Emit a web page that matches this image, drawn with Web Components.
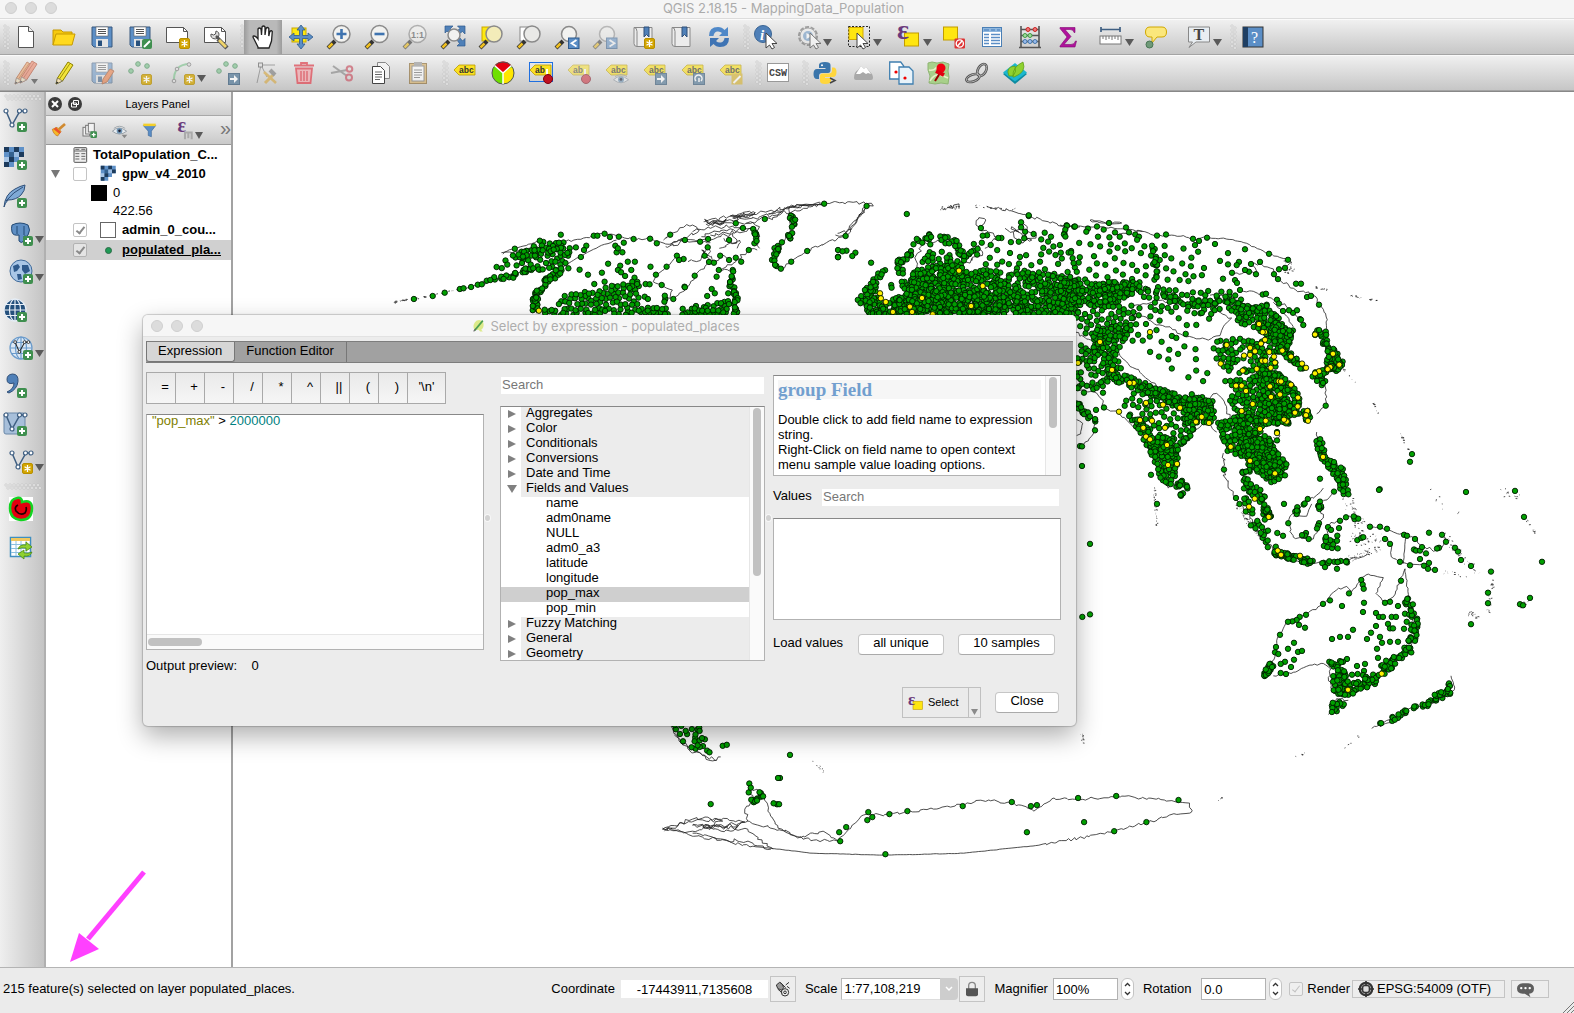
<!DOCTYPE html>
<html lang="en">
<head>
<meta charset="utf-8">
<title>QGIS 2.18.15 - MappingData_Population</title>
<style>
html,body{margin:0;height:100%}
body{font:13px/16px "Liberation Sans",Arial,sans-serif;color:#000;overflow:hidden;background:#ececec}
</style>
</head>
<body>
<qgis-app></qgis-app>
<script>
/* ---------- icon library: every glyph sits in a 24 x 24 box ---------- */
const plus='<rect x="14" y="14" width="10" height="10" rx="2" fill="#3f8f4f"/><path d="M19 16v6M16 19h6" stroke="#fff" stroke-width="2"/>';
const star='<rect x="13.5" y="13.5" width="10" height="10" rx="1.5" fill="#d3a500" stroke="#b88f00"/><path d="M18.5 15v7M15.5 16.8l6 3.5M21.5 16.8l-6 3.5" stroke="#fff" stroke-width="1.3"/>';
const lens=(x,y,r,f='#f2f2f0')=>`<path d="M1 23l7-7" stroke="#333" stroke-width="4"/><path d="M1.5 22.5l4-4" stroke="#f0c020" stroke-width="2.5"/><circle cx="${x}" cy="${y}" r="${r}" fill="${f}" stroke="#8a8a8a" stroke-width="1.5"/>`;
const page='<path d="M4.5 1.5h10l5 5v16h-15z" fill="#fff" stroke="#555"/><path d="M14.5 1.5v5h5" fill="#eee" stroke="#555"/>';
const floppy='<path d="M2 2h20v20H4l-2-2z" fill="#5d8fc6" stroke="#39597f"/><rect x="6" y="2" width="12" height="9" fill="#fff" stroke="#666" stroke-width=".6"/><path d="M8 4.5h8M8 6.5h8M8 8.5h8" stroke="#555"/><rect x="6" y="14" width="12" height="8" fill="#e4e4e4"/><rect x="8" y="15.5" width="4" height="5.5" fill="#28507c"/>';
const tag=t=>`<path d="M1 9l5-5h16v10H6z" fill="#fbe122" stroke="#b99a00" stroke-width=".8"/><text x="6" y="12" font-size="8.5" font-weight="bold" fill="#333" font-family="Liberation Sans">${t}</text>`;
const blueSq=p=>`<rect x="12.5" y="12.5" width="11" height="11" fill="#5b7f9c" stroke="#3d5f7c"/>${p}`;
const vee=(c='#3f5f82')=>`<path d="M3 3l6 14 8-14h5" fill="none" stroke="${c}" stroke-width="1.5"/><g fill="#fff" stroke="${c}" stroke-width="1.2"><circle cx="3" cy="3" r="2"/><circle cx="9" cy="17" r="2"/><circle cx="16.5" cy="3" r="2"/><circle cx="22" cy="3" r="2"/></g>`;
const checker='<path d="M1 1h20v10h-5v5h-5v5H1z" fill="#5f91c8"/><g fill="#1d3b5c"><rect x="1" y="1" width="5" height="5"/><rect x="11" y="1" width="5" height="5"/><rect x="6" y="6" width="5" height="5" fill="#34618f"/><rect x="16" y="6" width="5" height="5" fill="#1d3b5c"/><rect x="1" y="11" width="5" height="5" fill="#a9c6e6"/><rect x="11" y="6" width="5" height="5" fill="#9cbde2"/><rect x="6" y="11" width="5" height="5"/><rect x="1" y="16" width="5" height="5"/></g>';
const globe=(f,s)=>`<circle cx="12" cy="12" r="11" fill="${f}"/><g fill="none" stroke="${s}" stroke-width="1.2"><circle cx="12" cy="12" r="11"/><ellipse cx="12" cy="12" rx="5.5" ry="11"/><path d="M12 1v22M1 12h22M2.5 6.5h19M2.5 17.5h19"/></g>`;
const greenDots='<g fill="#8cc79a" stroke="#5f9a70"><circle cx="3" cy="10" r="2.3"/><circle cx="10" cy="3" r="2.3"/><circle cx="19" cy="5" r="2.3"/></g>';
const cursor='<path d="M10 8v15l3.5-3 2.5 4 2.5-1.5-2.5-4h5z" fill="#fff" stroke="#444"/>';
const pencil=(a,b)=>`<path d="M4 23l1.5-6L16 1l5 3L10.5 20z" fill="${a}" stroke="${b}"/><path d="M7.5 18L18 2.5" stroke="${b}" stroke-width=".8"/><path d="M4 23l1.5-6 5 3z" fill="#f3dfb5" stroke="#555" stroke-width=".6"/><path d="M4 23l.6-2.5 1.8 1z" fill="#222"/>`;
const eps=(x,y,s)=>`<text x="${x}" y="${y}" font-size="${s}" font-family="Liberation Serif" font-weight="bold" fill="#6a3a7c">ε</text>`;
const eye='<path d="M2 13q9-9 20 0q-10 8-20 0z" fill="#e9eef2" stroke="#7d8790"/><circle cx="12" cy="12.5" r="4" fill="#6f95b5"/><circle cx="12" cy="12.5" r="1.8" fill="#223"/><path d="M4 9q8-6 16 0" fill="none" stroke="#8a939b"/>';
const ICONS={
 file:page,
 open:'<path d="M1 20V5h8l2 2h9v4" fill="#f6c90e" stroke="#c79a00"/><path d="M1 20l3-11h19l-3 11z" fill="#ffd91f" stroke="#c79a00"/>',
 save:floppy,
 saveas:floppy+'<rect x="14" y="14" width="10" height="10" rx="2" fill="#3f8f4f"/><path d="M16 22l6-6" stroke="#fff" stroke-width="2"/>',
 composer:'<path d="M.5 2.5h17l4 4v11h-21z" fill="#fff" stroke="#555"/><path d="M17.5 2.5v4h4" fill="none" stroke="#555"/>'+star,
 manager:'<path d="M.5 2.5h17l4 4v11h-21z" fill="#fff" stroke="#555"/><path d="M17.5 2.5v4h4" fill="none" stroke="#555"/><path d="M14 14l9 9" stroke="#555" stroke-width="4.5"/><path d="M15 15l7 7" stroke="#f0d46a" stroke-width="2.8"/><path d="M7 9a4 4 0 1 0 5-3l-.5 3-2 1z" fill="#ddd" stroke="#555"/><path d="M12 11l3 3" stroke="#555" stroke-width="2.5"/>',
 hand:'<path d="M7 22L3 14q-2-3 0-3t4 3V4q1.5-2 3 0l.5 6L11 2q1.5-2 3 0v8l1-6.5q1.5-2 2.8 0V11l1-4.5q1.5-1.5 2.5 0L20.5 16 18 23H7z" fill="#fff" stroke="#222" stroke-width="1.3"/>',
 pan:'<rect x="3" y="3" width="14" height="14" fill="#fde910" stroke="#c9a800"/><path d="M12 0l4 5h-2.5v5.5H19V8l5 4-5 4v-2.5h-5.5V19H16l-4 5-4-5h2.5v-5.5H5V16l-5-4 5-4v2.5h5.5V5H8z" fill="#5b8ec6" stroke="#2f5a8c" stroke-width=".8"/>',
 zin:lens(14.5,9,8.5)+'<path d="M14.5 4v10M9.5 9h10" stroke="#3f74b0" stroke-width="2.6"/>',
 zout:lens(14.5,9,8.5)+'<path d="M9.5 9h10" stroke="#3f74b0" stroke-width="2.6"/>',
 z11:'<g opacity=".6">'+lens(14.5,9,8.5)+'<text x="8" y="12.5" font-size="9" font-weight="bold" fill="#555" font-family="Liberation Sans">1:1</text></g>',
 zfull:'<g fill="#4f80b8" stroke="#2f5a8c" stroke-width=".7"><path d="M4 1h8L9.5 3.5 12 7l-3 2-3-3-2 2zM24 1v8l-2.500-2.500L18 9l-2-3 3-2.500L16.500 1zM24 21h-8l2.500-2.500L16 15l3-2 2.500 3 2.500-2.500z"/></g>'+lens(13,10,6),
 zsel:'<rect x="3" y="2" width="12" height="14" fill="#fde910" stroke="#c9a800"/>'+lens(15,9,8,'#f3ecb9'),
 zlay:'<rect x="3" y="2" width="12" height="14" fill="#fff" stroke="#888"/>'+lens(15,9,8,'#e9e9e7'),
 zlast:lens(14,9,7.5)+'<rect x="13.5" y="13" width="10.5" height="10.5" fill="#5b8ec6" stroke="#2f5a8c"/><path d="M21.5 15l-5 3.3 5 3.3" fill="none" stroke="#fff" stroke-width="1.8"/>',
 znext:'<g opacity=".5">'+lens(14,9,7.5)+'<rect x="13.5" y="13" width="10.5" height="10.5" fill="#5b8ec6" stroke="#2f5a8c"/><path d="M16.5 15l5 3.3-5 3.3" fill="none" stroke="#fff" stroke-width="1.8"/></g>',
 bmnew:'<path d="M3 2.5h18v19H6q-3 0-3-3z" fill="#ececec" stroke="#888"/><path d="M3 2.5q3 0 3 4v15" fill="none" stroke="#888"/><path d="M13 2h5v10l-2.5-2.5L13 12z" fill="#4f80b8" stroke="#2f4f78"/>'+star,
 bm:'<path d="M3 2.5h18v19H6q-3 0-3-3z" fill="#ececec" stroke="#888"/><path d="M3 2.5q3 0 3 4v15" fill="none" stroke="#888"/><path d="M13 2h5v10l-2.5-2.5L13 12z" fill="#4f80b8" stroke="#2f4f78"/>',
 refresh:'<path d="M2 11Q2 2 11 2q4 0 6.500 3L21 2v9h-9l3-3q-2-2-5-1.500-3 .8-3.500 4.500z" fill="#4f88c8"/><path d="M22 13q0 9-9 9-4 0-6.500-3L3 22v-9h9l-3 3q2 2 5 1.500 3-.8 3.500-4.500z" fill="#3f74b4"/>',
 identify:'<circle cx="9" cy="9" r="8.5" fill="#4f80b8" stroke="#3a6595"/><text x="6" y="14.5" font-size="15" font-style="italic" font-weight="bold" fill="#fff" font-family="Liberation Serif">i</text><g transform="translate(2 0)">'+cursor+'</g>',
 action:'<g opacity=".65"><circle cx="11" cy="11" r="9" fill="#eee" stroke="#777" stroke-width="2" stroke-dasharray="4 1.6"/><circle cx="11" cy="11" r="8" fill="#eee" stroke="#888"/><circle cx="11" cy="11" r="5" fill="#7ca3cb"/><path d="M9.5 8l5 3-5 3z" fill="#fff"/><g transform="translate(3 0)">'+cursor+'</g></g>',
 select:'<rect x="1.5" y="1.5" width="21" height="20" fill="none" stroke="#222" stroke-dasharray="2 1.5"/><rect x="2" y="2.5" width="14" height="12" fill="#ffe610" stroke="#d1a900"/>'+cursor,
 selexp:'<rect x="7.5" y="8" width="14" height="13" fill="#ffe610" stroke="#c29c00"/>'+eps(0,14,28),
 deselect:'<rect x="1.5" y="2" width="14" height="13" fill="#ffe610" stroke="#c29c00"/><rect x="12.5" y="13.5" width="10.5" height="10" rx="1" fill="#dd3333"/><circle cx="17.8" cy="18.5" r="3.6" fill="none" stroke="#fff" stroke-width="1.4"/><path d="M15.5 21l4.5-5" stroke="#fff" stroke-width="1.4"/>',
 table:'<rect x="2.5" y="2.5" width="19" height="19" fill="#fff" stroke="#4a7fb5"/><rect x="3" y="3" width="18" height="4" fill="#8fb7de"/><path d="M4 9.5h5M4 12.5h5M4 15.5h5M4 18.5h5M11 9.5h9M11 12.5h9M11 15.5h9M11 18.5h9M4 5h5M11 5h4M17 5h3" stroke="#5b8ec6" stroke-width="1.3"/>',
 abacus:'<path d="M3 1v21M21 1v21M1 22.5h22M3 4.5h18M3 10.5h18M3 16.5h18" stroke="#555" stroke-width="1.6" fill="none"/><g fill="#e77" stroke="#c22"><circle cx="10" cy="4.5" r="2"/><circle cx="17" cy="4.5" r="2"/></g><g fill="#9d9" stroke="#494"><circle cx="7" cy="10.5" r="2"/><circle cx="12" cy="10.5" r="2"/></g><g fill="#9be" stroke="#47a"><circle cx="7" cy="16.5" r="2"/><circle cx="12" cy="16.5" r="2"/><circle cx="17" cy="16.5" r="2"/></g>',
 sigma:'<path d="M4 2.5h15v5h-1q-.5-3-4-3H9l6 7-7 8h7q3.5 0 4.5-3.5h1L19 22H4v-1l7-9-7-8.5z" fill="#b0129c" stroke="#7d0a70" stroke-width=".6"/>',
 measure:'<path d="M2 2v5M21 2v5M2 4.5h19" stroke="#3f5f82" stroke-width="1.7"/><rect x="1" y="11" width="21" height="8" fill="#fff" stroke="#777"/><path d="M4 11v3M7 11v4M10 11v3M13 11v4M16 11v3M19 11v4" stroke="#777"/>',
 tip:'<path d="M6 2h12q4.5 0 4.5 5t-4.5 5h-5l-5 6v-6H6q-4.5 0-4.5-5T6 2z" fill="#fbe77c" stroke="#d0a800"/><circle cx="5.5" cy="19.5" r="3.5" fill="#6f9a78" stroke="#4a7554"/>',
 text:'<path d="M1.5 2h21v15H9l-7 5.5 3.5-5.5h-4z" fill="#e9eef2" stroke="#888"/><text x="6.5" y="15" font-size="16" font-weight="bold" fill="#444" font-family="Liberation Serif">T</text>',
 help:'<rect x="2" y="2" width="20" height="20" fill="#5b8ec6" stroke="#333"/><rect x="2" y="2" width="5" height="20" fill="#1f3f63"/><text x="10" y="18" font-size="16" fill="#fff" font-family="Liberation Serif">?</text>',
 edits:'<g opacity=".55"><g transform="translate(-3 0)">'+pencil('#f0a060','#b05020')+'</g><g transform="translate(2 -1)">'+pencil('#f08060','#b04020')+'</g></g><path d="M17 18h7l-3.5 5z" fill="#777"/>',
 pencil:pencil('#f2e43a','#8d8000'),
 saveed:'<g opacity=".5">'+floppy+'<path d="M12 23l1-5 7-10 4 2-7 11z" fill="#f07030" stroke="#a04010"/></g>',
 addf:'<g opacity=".75">'+greenDots+star+'</g>',
 curve:'<g opacity=".75"><path d="M3 21Q2 3 19 3" fill="none" stroke="#8cc79a" stroke-width="2"/><g fill="#ddd" stroke="#888"><circle cx="3" cy="20" r="1.8"/><circle cx="6" cy="8" r="1.8"/><circle cx="18" cy="3.5" r="1.8"/></g>'+star+'</g>',
 movef:'<g opacity=".75">'+greenDots+blueSq('<path d="M14 17h4v-3l4 4-4 4v-3h-4z" fill="#fff"/>')+'</g>',
 node:'<g opacity=".6"><path d="M3 22L7 4l14 0M7 4l6 12" fill="none" stroke="#777"/><rect x="4.5" y="2" width="4" height="4" fill="#ddd" stroke="#555"/><path d="M11 22l9-9" stroke="#d6a53a" stroke-width="3"/><path d="M10 11l12 11" stroke="#d6a53a" stroke-width="2.5"/><path d="M16 9l5 5" stroke="#777" stroke-width="4"/></g>',
 trash:'<g opacity=".8"><path d="M2 4.5h20M9 4V2h6v2" fill="none" stroke="#e05560" stroke-width="1.8"/><path d="M4 7.5h16l-1.5 14.5h-13z" fill="#f0b0b4" stroke="#e05560" stroke-width="1.8"/><path d="M9 10v10M12 10v10M15 10v10" stroke="#e05560" stroke-width="1.5"/></g>',
 cut:'<g opacity=".65"><path d="M1 12l16-3M3 5l14 10" stroke="#888" stroke-width="2"/><circle cx="19.500" cy="8" r="2.800" fill="none" stroke="#c85060" stroke-width="2"/><circle cx="19" cy="16.500" r="3" fill="none" stroke="#c85060" stroke-width="2"/></g>',
 copy:'<path d="M9.5 1.5h8l4 4v12h-12z" fill="#f2f2f2" stroke="#888"/><path d="M4.5 5.5h8l4 4v13h-12z" fill="#fff" stroke="#444"/><path d="M7 11h7M7 13.5h7M7 16h7M7 18.5h5" stroke="#666"/>',
 paste:'<g opacity=".65"><rect x="3.5" y="2.5" width="17" height="20" fill="#d9b26a" stroke="#8b6b34"/><rect x="6" y="5" width="12" height="15" fill="#fff" stroke="#777"/><rect x="8" y="1" width="8" height="4" fill="#999"/><path d="M8 9h8M8 11.5h8M8 14h8M8 16.5h6" stroke="#777"/></g>',
 label:tag('abc'),
 pie:'<circle cx="12" cy="12" r="11" fill="#6ee000"/><path d="M12 12v11a11 11 0 0 0 9-17z" fill="#ffe600"/><path d="M12 12L3.5 4.500a11 11 0 0 1 17 0z" fill="#e3000f"/><circle cx="12" cy="12" r="11" fill="none" stroke="#555"/><path d="M12 12v11M12 12L3.500 4.500M12 12l8.500-7.500" stroke="#fff" stroke-width="1.5"/>',
 abpin:'<rect x=".5" y="1.5" width="23" height="19" fill="none" stroke="#1f6fe0"/>'+tag('ab')+'<path d="M18 8v8" stroke="#fff" stroke-width="2"/><circle cx="19" cy="18" r="4.5" fill="#c01020" stroke="#7c0010"/>',
 pin:'<g opacity=".5">'+tag('ab')+'<path d="M18 8v8" stroke="#fff" stroke-width="2"/><circle cx="19" cy="18" r="4.5" fill="#d02030" stroke="#7c0010"/></g>',
 labeye:'<g opacity=".6">'+tag('abc')+'<g transform="translate(7 9) scale(.75)">'+eye+'</g></g>',
 labmove:'<g opacity=".65">'+tag('abc')+blueSq('<path d="M14 17h4v-3l4 4-4 4v-3h-4z" fill="#fff"/>')+'</g>',
 labrot:'<g opacity=".65">'+tag('abc')+blueSq('<path d="M15 20a3.5 3.5 0 1 1 5 0M18 17l0 4" fill="none" stroke="#fff" stroke-width="1.5"/>')+'</g>',
 labedit:'<g opacity=".65">'+tag('abc')+'<rect x="12.5" y="12.5" width="11" height="11" fill="#d9b73a"/><path d="M14.5 22l7-7" stroke="#fff" stroke-width="2"/></g>',
 csw:'<rect x="1.5" y="2.5" width="21" height="18" fill="#fff" stroke="#999"/><text x="3" y="14.5" font-size="10" font-weight="bold" fill="#444" font-family="Liberation Mono">CSW</text>',
 python:'<path d="M12 1q-6 0-6 3v3h6.5v1H4q-3.5 0-3.5 5T4 18h2v-3q0-3 3-3h6q2.5 0 2.5-3V4Q17.5 1 12 1z" fill="#3a75ab"/><circle cx="9" cy="4.2" r="1" fill="#fff"/><path d="M12 23q6 0 6-3v-3h-6v-1h8q3.5 0 3.5-5T20 6.5h-1V9q0 3.5-3 3.5H9.5Q7 12.5 7 15v5q0 3 5 3z" fill="#ffd63d"/><path d="M17 17l5 2.5-5 2.5" fill="none" stroke="#444" stroke-width="1.5"/>',
 hill:'<path d="M3 17q0-6 4-8l3-4 3 3 2-2 4 5q3 2 3 6 0 2-2 2H5q-2 0-2-2z" fill="#a9a9a9"/><path d="M5 13l5-8 3 3 2-2 5 7-3-1-2 1-3-2-3 2z" fill="#fff"/>',
 docs:'<path d="M.7 1h11l3 4v13H.7z" fill="#fff" stroke="#3f7fb0" stroke-width="1.3"/><path d="M10 6h10l4 4v13H10z" fill="#e8f3fa" stroke="#3f7fb0" stroke-width="1.3"/><circle cx="7" cy="11" r="1.6" fill="#e00"/><circle cx="16" cy="17" r="1.6" fill="#e00"/>',
 mappin:'<path d="M1 2l4-1 5 1 6-1 6 2-1 7 1 6-1 7-7-1-6 1-6-1 1-7-2-6z" fill="#a8d08a" stroke="#8fb573"/><path d="M3 20q4-7 9-6t9 3M2 9q5 1 8-3" stroke="#e8f0c8" stroke-width="1.5" fill="none"/><path d="M13 12l-5 8" stroke="#900" stroke-width="2"/><circle cx="14" cy="7" r="4.5" fill="#f00010"/><path d="M9 10l8 4" stroke="#e00010" stroke-width="4"/>',
 chain:'<g fill="none" stroke="#555" stroke-width="2.6"><ellipse cx="17" cy="9" rx="4" ry="6.5" transform="rotate(30 17 9)"/><ellipse cx="8" cy="17" rx="7" ry="3.5" transform="rotate(-20 8 17)"/></g><g fill="none" stroke="#bbb" stroke-width=".8"><ellipse cx="17" cy="9" rx="4" ry="6.5" transform="rotate(30 17 9)"/><ellipse cx="8" cy="17" rx="7" ry="3.5" transform="rotate(-20 8 17)"/></g>',
 web:'<path d="M12 4l12 9-12 10L0 13z" fill="#0d8aa0"/><path d="M12 2l12 9.5-12 9L0 11.5z" fill="#1cb7cf"/><path d="M6 15Q2 6 12 5q2 6-2 10zM10 16Q9 6 20 1q4 10-9 15z" fill="#8fd12f" stroke="#5a9a10" stroke-width=".7"/>',
 vec:vee()+plus, ras:checker+plus,
 feather:'<path d="M1 23Q2 10 12 5q5-3 10-4 0 6-4 10-5 5-13 5-3 3-4 7z" fill="#7fa9d6" stroke="#2f4f78"/><path d="M3 17Q10 8 20 3" stroke="#2f4f78" fill="none"/>'+plus,
 pg:'<path d="M3 3q8-4 16 0 3 5 0 10-1 2-4 1v5q-3 3-5 0v-6q-6 1-7-3-1-4 0-7z" fill="#5f8fc4" stroke="#234a75"/><path d="M8 4v8M15 4v9" stroke="#234a75" fill="none"/>'+plus,
 spat:'<circle cx="12" cy="11" r="11" fill="#a9c6e6" stroke="#3f6a9a"/><path d="M4 6l5-2 2 3-3 4-3 1zM13 5l6 0 2 6-5 3-3-4zM8 14l4 0 1 5-4 1z" fill="#2f5a8c"/>'+plus,
 wms:globe('#24507c','#e7eef6')+plus,
 wfs:globe('#dce8f4','#6b9bcb')+'<g transform="translate(4 4) scale(.7)">'+vee('#222')+'</g>'+plus,
 comma:'<path d="M4 18q7-3 7-9-7 2-7-3.500 0-5 5.500-5.500 6 0 5.500 7.500-1 8-9 11.500z" fill="#4f80b8" stroke="#2f4f78"/>'+plus,
 virt:'<rect x="1" y="1" width="21" height="21" rx="2" fill="#a7bfda" stroke="#6a88a8"/>'+vee()+plus,
 newv:vee()+star,
 curl:'<rect width="24" height="24" fill="#fff"/><path d="M8 1q5-1 5 4 10-3 10 6 0 12-11 12Q1 22 1 11 1 2 8 1z" fill="#e3000f" stroke="#12d422" stroke-width="2.5"/><path d="M9 8q-4 2-2 6 4 5 9 2 2-3 1-6" fill="none" stroke="#200" stroke-width="1.7"/>',
 sheet:'<rect x="1.5" y="2.5" width="20" height="19" fill="#fff" stroke="#3f8fc0" stroke-width="1.5"/><rect x="2" y="3" width="19" height="3" fill="#f0c860"/><path d="M2 9.5h19M2 13.5h19M2 17.5h19M7 6v15M12 6v15M17 6v15" stroke="#8cc0e0"/><path d="M9 14q2-5 8-4V7l6 5-6 4v-3q-4-1-8 1zM23 17q-2 5-8 4v3l-6-5 6-4v3q4 1 8-1z" fill="#8fd12f" stroke="#4d8a10" stroke-width=".8"/>',
 brush:'<path d="M2 11l7-3 6 6-5 7q-6-2-8-10z" fill="#f5b928" stroke="#c26a10"/><path d="M7 8l8 7-2 3-9-7z" fill="#e8532f"/><path d="M12 11l9-8" stroke="#d08a30" stroke-width="4"/>',
 addgrp:'<g fill="#f2f2f2" stroke="#777" stroke-width="1.5"><rect x="3" y="8" width="10" height="13"/><rect x="7" y="5" width="10" height="13"/><rect x="11" y="2" width="9" height="13"/></g>'+plus,
 eye:eye+'<path d="M15 18h8l-4 5z" fill="#888"/>',
 funnel:'<path d="M2 4h20l-7 9v9l-5-2v-7z" fill="#5b8ec6" stroke="#3a6595"/><rect x="2" y="1" width="20" height="4" fill="#f3cf2b"/>',
 epsf:eps(3,14,24)+'<path d="M12 14v9M12 15h8v8M16 15v7" fill="none" stroke="#aaa" stroke-width="2.500"/>',
 tbl:'<rect x="3" y="1" width="19" height="22" rx="1" fill="#eee" stroke="#555" stroke-width="1.5"/><path d="M3 6h19M5 10h6M5 14h6M5 18h6M14 10h6M14 14h6M14 18h6M5 3.5h6M14 3.5h6" stroke="#666" stroke-width="1.5"/>',
 checker:checker,
 selx:'<rect x="8" y="10" width="15" height="13" fill="#ffe610" stroke="#c29c00"/>'+eps(0,16,27),
 q:'<path d="M4 20Q0 10 8 3q9-4 13 4 2 9-4 13l3 3h-5l-3-3q-3 1-4-1z" fill="#dcea8a"/><path d="M5 21L20 3" stroke="#4aa050" stroke-width="3"/><path d="M3 23l4-5" stroke="#666" stroke-width="2"/>',
 mouse:'<g fill="none" stroke="#333" stroke-width="1.5"><path d="M2 6l5-4 4 3 2 5-3 4-6-3z" fill="#999"/><circle cx="15" cy="17" r="5.5"/><circle cx="15" cy="17" r="2"/><path d="M8 2l8 8M4 12l7 6M16 6l5-4M18 8l4 3"/></g>',
 lock:'<path d="M7 12V7q0-5 5-5t5 5v5" fill="none" stroke="#888" stroke-width="2"/><path d="M3 11h18v9q0 3-3 3H6q-3 0-3-3z" fill="#555"/>',
 crs:'<circle cx="12" cy="12" r="9.5" fill="#999" stroke="#333" stroke-width="3"/><path d="M12 0v24M0 12h24" stroke="#333" stroke-width="2.5"/><rect x="7" y="7" width="10" height="10" rx="3" fill="#ddd" stroke="#333" stroke-width="2"/>',
 bubble:'<path d="M8 3h8q8 1 8 7.5T17 18l2 5-8-5H8q-8-1-8-7.5T8 3z" fill="#5e5e5e"/><g fill="#fff"><circle cx="6" cy="10" r="1.7"/><circle cx="12" cy="10" r="1.7"/><circle cx="18" cy="10" r="1.7"/></g>'
};
const svg=(n,s=24)=>`<svg width="${s}" height="${s}" viewBox="0 0 24 24" aria-hidden="true">${ICONS[n]}</svg>`;
const define=(name,html,setup)=>customElements.define(name,class extends HTMLElement{
  connectedCallback(){
    if(this.shadowRoot)return;
    const root=this.attachShadow({mode:'open'});
    root.innerHTML=typeof html==='function'?html(this):html;
    if(setup)setup(root,this);
  }
});

/* ---------- small parts ---------- */
define('ui-icon',el=>`<style>:host{display:inline-flex}svg{display:block;overflow:visible}</style>${svg(el.getAttribute('name'),+el.getAttribute('size')||24)}`);

define('window-lights',`<style>:host{display:flex;gap:8px}i{width:10px;height:10px;border:1px solid #cfcfcf;border-radius:50%;background:#dcdcdc}</style><i></i><i></i><i></i>`);

define('grip-dots',el=>{
  const v=el.hasAttribute('wide');let d='';
  for(let i=0;i<(v?9:6);i++){const a=i*4;d+=v?`<path d="M${5+a} 1h2v2h-2zM${7+a} 4h2v2h-2z"/>`:`<path d="M4 ${a}h2v2h-2zM7 ${a+2}h2v2h-2z"/>`;}
  return `<style>:host{display:flex;align-items:center;flex:none;${v?'height:7px;width:100%':'width:7px'}}svg{overflow:visible;display:block}</style><svg width="${v?44:7}" height="${v?7:24}" fill="#f8f8f8" stroke="#b8b8b8" stroke-width=".5">${d}</svg>`;
});

define('tool-button',el=>{
  const menu=el.hasAttribute('menu');
  return `<style>
  :host{display:block;flex:none}
  button{box-sizing:border-box;display:flex;align-items:center;justify-content:center;width:38px;height:34px;padding:0 0 1px;border:0;background:none}
  button.menu{width:50px;justify-content:flex-start;padding-left:12px;gap:2px}
  button.menu .a{margin-top:12px}
  :host([active]) button{background:linear-gradient(90deg,#9c9c9c,#b9b9b9 15%,#b9b9b9 85%,#9c9c9c)}
  :host([side]) button{width:45px;height:38px;justify-content:flex-start;padding-left:3px}
  :host([side][inset]) button,:host([side]) button.menu{padding-left:9px;gap:2px}
  svg{display:block;overflow:visible;flex:none}
  </style><button class="${menu?'menu':''}" aria-label="${el.getAttribute('icon')}">${svg(el.getAttribute('icon'))}${menu?'<svg class="a" width="9" height="9"><path d="M0 1h9l-4.5 7z" fill="#5a5a5a"/></svg>':''}</button>`;
});

define('tool-group',`<style>:host{display:flex;flex:none}:host([column]){flex-direction:column}</style><slot></slot>`);

define('tool-bar',`<style>
:host{display:flex;gap:2px;height:36px;background:linear-gradient(#f0f0f0,#c6c6c6);border-bottom:1px solid #a4a4a4;border-top:1px solid #fafafa;box-sizing:border-box;flex:none}
:host([column]){flex-direction:column;width:46px;height:auto;padding-top:2px;background:linear-gradient(90deg,#efefef,#c4c4c4);border:0;border-right:2px solid #b0b0b0}
</style><slot></slot>`);

/* ---------- layers panel ---------- */
define('layer-row',`<style>
:host{display:flex;align-items:center;height:18px;white-space:nowrap;font-weight:bold}
:host([tall]){height:20px}
:host([plain]){font-weight:normal}
:host([current]){background:#d0d0d0;text-decoration:underline}
</style><slot></slot>`);

define('layers-panel',`<style>
:host{display:flex;flex-direction:column;width:187px;flex:none;background:#fff;border-right:2px solid #a2a2a2;box-sizing:border-box;overflow:hidden}
header{display:flex;align-items:center;height:23px;background:linear-gradient(#f0f0f0,#cfcfcf);border-bottom:1px solid #a8a8a8;padding-left:2px;gap:6px;flex:none}
header svg,header button{display:block}
button{padding:0;border:0;background:none}
h2{margin:0;font:11px/16px "Liberation Sans",Arial,sans-serif;flex:1;text-align:center;padding-right:4px}
nav{display:flex;align-items:center;height:29px;background:linear-gradient(#efefef,#c9c9c9);border-bottom:1px solid #999;padding-left:5px;gap:14px;flex:none;box-sizing:border-box;margin-bottom:1px}
nav button{display:flex;align-items:flex-end}
nav .more{font:20px/20px "Liberation Sans",sans-serif;color:#777;margin-left:auto;padding:0 0 4px}
.fold{width:10px;margin:0 12px 0 5px}
input{appearance:none;box-sizing:border-box;width:14px;height:14px;margin:0 13px 0 0;border:1px solid #c4c4c4;border-radius:2px;background:#fff;position:relative}
.off{margin-left:27px}
layer-row[current] input{background:#e4e4e4;border-color:#b2b2b2}
input:checked::after{content:"";position:absolute;left:4px;top:1px;width:3px;height:7px;border:solid #8a8a8a;border-width:0 2px 2px 0;transform:rotate(38deg)}
.sw{width:14px;height:14px;border:1px solid #666;margin-right:6px}
.bk{width:16px;height:16px;background:#000;margin:0 6px 0 45px}
.pt{width:5px;height:5px;border-radius:50%;background:#1e9a55;border:1px solid #2c6b48;margin:0 10px 0 5px}
</style>
<header><button aria-label="Close panel"><svg width="14" height="14"><circle cx="7" cy="7" r="7" fill="#3c3c3c"/><path d="M4 4l6 6M10 4l-6 6" stroke="#fff" stroke-width="2"/></svg></button><button aria-label="Float panel"><svg width="14" height="14"><circle cx="7" cy="7" r="7" fill="#3c3c3c"/><path d="M5.5 3.5h5v4h-5zM3.5 6h5v4h-5z" stroke="#fff" fill="#3c3c3c"/></svg></button><h2>Layers Panel</h2></header>
<nav><button aria-label="Style"><ui-icon name="brush" size="16"></ui-icon></button><button aria-label="Add group"><ui-icon name="addgrp" size="16"></ui-icon></button><button aria-label="Visibility"><ui-icon name="eye" size="17"></ui-icon></button><button aria-label="Filter legend"><ui-icon name="funnel" size="15"></ui-icon></button><button aria-label="Filter by expression" style="margin-left:4px"><ui-icon name="epsf" size="20"></ui-icon><svg width="8" height="8"><path d="M0 0h8l-4 7z" fill="#5a5a5a"/></svg></button><button class="more" aria-label="More">»</button></nav>
<layer-row><ui-icon name="tbl" size="16" style="margin:0 5px 0 26px"></ui-icon>TotalPopulation_C...</layer-row>
<layer-row tall><svg class="fold" width="10" height="8"><path d="M0 0h9l-4.5 8z" fill="#777"/></svg><input type="checkbox" aria-label="gpw_v4_2010"><ui-icon name="checker" size="18" style="margin-right:4px"></ui-icon>gpw_v4_2010</layer-row>
<layer-row plain><span class="bk"></span>0</layer-row>
<layer-row plain><span style="margin-left:67px">422.56</span></layer-row>
<layer-row tall><input class="off" type="checkbox" checked aria-label="admin_0_countries"><span class="sw"></span>admin_0_cou...</layer-row>
<layer-row tall current><input class="off" type="checkbox" checked aria-label="populated_places"><span class="pt"></span>populated_pla...</layer-row>`);

/* ---------- map ---------- */
define('map-canvas',`<style>:host{display:block;flex:1;min-width:0;background:#fff;overflow:hidden}svg{display:block;width:100%;height:100%}</style>
<svg viewBox="233 92 1341 875" preserveAspectRatio="xMinYMin slice" role="img" aria-label="World map of populated places"></svg>`,root=>{
  let seed=20218;
  const rnd=()=>{seed=(seed*1664525+1013904223)>>>0;return seed/4294967296;};
  const lines=[],dots=[],gold=[];
  const frame=(ox,oy,kx,ky)=>s=>s.trim().split(/\s+/).map(p=>{const [x,y]=p.split(',').map(Number);return [ox+x/kx,oy+y/ky];});
  const W=frame(380,190,2.24,3), E=frame(1060,190,3,2.851), P=frame(0,0,.9962,.9962);
  const coast=(pts,j=1)=>{
    let d='M'+pts[0].map(v=>v.toFixed(1));
    for(let i=1;i<pts.length;i++){
      const [a,b]=pts[i-1],[c,e]=pts[i],len=Math.hypot(c-a,e-b),n=Math.max(1,Math.round(len/3));
      for(let k=1;k<=n;k++){const t=k/n,q=k<n?j:0;d+='L'+(a+(c-a)*t+(rnd()-.5)*2*q).toFixed(1)+' '+(b+(e-b)*t+(rnd()-.5)*2*q).toFixed(1);}
    }
    lines.push(d);
  };
  const chain=(pts,n,spread=1)=>{
    const seg=[];let tot=0;
    for(let i=1;i<pts.length;i++){const l=Math.hypot(pts[i][0]-pts[i-1][0],pts[i][1]-pts[i-1][1]);seg.push(l);tot+=l;}
    for(let k=0;k<n;k++){let t=rnd()*tot,i=0;while(t>seg[i]&&i<seg.length-1){t-=seg[i];i++;}
      const u=t/seg[i];dots.push([pts[i][0]+(pts[i+1][0]-pts[i][0])*u+(rnd()-.5)*2*spread,pts[i][1]+(pts[i+1][1]-pts[i][1])*u+(rnd()-.5)*2*spread]);}
  };
  const inside=(x,y,p)=>{let r=false;for(let i=0,j=p.length-1;i<p.length;j=i++){if((p[i][1]>y)!==(p[j][1]>y)&&x<(p[j][0]-p[i][0])*(y-p[i][1])/(p[j][1]-p[i][1])+p[i][0])r=!r;}return r;};
  const fill=(p,n,gap=2)=>{
    const xs=p.map(q=>q[0]),ys=p.map(q=>q[1]),x0=Math.min(...xs),x1=Math.max(...xs),y0=Math.min(...ys),y1=Math.max(...ys),own=[];
    let tries=0;
    while(own.length<n&&tries++<n*60){const x=x0+rnd()*(x1-x0),y=y0+rnd()*(y1-y0);
      if(inside(x,y,p)&&!own.some(o=>Math.hypot(o[0]-x,o[1]-y)<gap))own.push([x,y]);}
    dots.push(...own);
  };
  const put=p=>dots.push(...p);
  const specks=(pts,n,s)=>{for(let k=0;k<n;k++){const i=Math.floor(rnd()*(pts.length-1)),t=rnd(),x=pts[i][0]+(pts[i+1][0]-pts[i][0])*t+(rnd()-.5)*s,y=pts[i][1]+(pts[i+1][1]-pts[i][1])*t+(rnd()-.5)*s;lines.push(`M${x.toFixed(1)} ${y.toFixed(1)}l${(rnd()*2).toFixed(1)} ${(rnd()-.5).toFixed(1)}`);}};

  /* North America */
  specks(W('30,337 76,327 145,308 204,290 240,272'),70,2);
  coast(W('185,296 225,284 262,268 318,245 362,232 400,240'),1);
  put(W('76,327 118,318 145,308 179,297 187,295 204,291 219,284 228,283 239,272'));
  chain(W('235,272 262,262 285,262 318,245 345,238 370,230'),26,2);
  fill(W('245,240 270,225 290,195 330,180 360,152 405,155 440,165 435,200 410,230 362,240 300,235'),60,3);
  fill(W('310,185 420,170 420,190 320,200'),14);
  coast(W('272,188 302,176 358,152'),.5);coast(W('275,192 310,182 350,165'),1.5);coast(W('400,240 440,205 490,170 530,150'),.4);
  coast(W('360,175 400,156 450,148 480,137 503,131 535,140 568,147 605,146 640,162 683,150 740,158'),1);
  put(W('302,176 358,152 405,134 401,158 479,137 487,137 503,131 515,141 535,140 546,158 568,147 605,146 462,167 457,180 450,201 527,167 530,187 543,187 533,175 422,235 447,239 466,254 511,221 538,227 555,215 571,215 533,240 540,247 563,240 497,248 549,258 570,263 503,275 480,282 459,306 524,290'));
  chain(W('405,243 375,270 360,300 345,330 350,370'),60,3);coast(W('405,243 375,270 360,300 345,330 350,370'),2);coast(W('390,250 362,290 350,340'),2);
  fill(W('360,375 370,355 420,355 600,350 645,350 645,375'),55,2.5);
  fill(W('395,345 415,310 470,310 500,290 580,270 580,345'),62,3.5);
  put(W('593,320 600,327 639,327 637,335 559,294 576,282'));
  put(W('650,134 620,160 683,150 717,155 735,147 797,100 813,114 836,117 862,87 734,172 727,197 665,197 680,207 670,210 642,230 606,230 618,254 595,282 604,283 631,285 638,317 657,327 682,290 705,257 737,216 748,218 762,197 782,210 797,203 782,150 826,180 809,215 759,240 754,260 790,240 785,277 790,292 743,297 750,310 733,318 683,292 780,310'));
  chain(W('790,240 785,280 797,300 797,340 795,375'),24,2);coast(W('790,240 785,280 797,300 797,340 795,375'),1.5);
  fill(W('670,375 675,355 740,340 795,330 797,375'),42,2);
  coast(W('660,205 642,230 618,254 612,275 631,285 655,300 650,325 640,320 640,345'),1);
  coast(W('737,216 705,257 690,290 670,310 657,327'),1.5);coast(W('845,180 826,180 797,215 760,245 790,240'),2);
  coast(W('734,172 727,197 748,218 762,197 782,210'),3);
  /* Arctic islands: loose strokes */
  [['635,150 650,134 680,112 700,105 715,120 690,140 650,165'],['640,170 690,155 740,150 790,130 800,150 760,175'],['725,95 790,75 860,65 920,50 995,40'],['730,102 800,92 850,80 900,70 960,50'],['700,125 740,115 790,108 840,115 800,125 740,135'],['800,100 830,95 850,110 845,150 850,175'],['770,145 790,160 805,150 800,175'],['720,140 770,120 820,118'],['820,100 850,88 890,80 900,65'],['730,90 735,100 790,100 810,80'],['720,180 740,200 755,215'],['690,215 720,205 740,185 735,170']].forEach(s=>coast(W(s[0]),2.2));
  [['727,88 735,101 775,88 770,98 745,102'],['785,78 840,68 835,75 790,84'],['870,72 920,52 990,44'],['836,117 850,140 842,160']].forEach(s=>{coast(W(s[0]),1.8);coast(W(s[0]),1.8);});
  chain(W('836,117 845,150 830,180'),8);
  /* Greenland */
  coast(W('917,50 995,40 1060,37 1095,40 1105,48 1090,48 1078,75 1065,100 1043,138 1000,158 957,183 921,215 895,240 880,225 882,195 900,165 915,130 922,80 917,50'),1.5);
  coast(W('1090,50 1070,85 1055,120 1020,135'),3);coast(W('1088,50 1072,80 1050,120 1025,130'),2);
  chain(W('917,70 928,100 918,140 892,165 882,200 880,225 895,235'),34,2);put(W('995,41 1090,48 1043,138 957,183 921,215 898,236'));
  put(W('1026,180 1045,182 1065,188 1026,200 1036,184 1058,198 1026,202 1100,218 1180,72'));
  specks(W('1255,55 1300,50'),30,4);coast(W('1270,52 1285,45 1297,56'),3);specks(W('1330,50 1420,60'),14,3);
  /* Europe */
  coast(W('1360,50 1410,62 1453,78 1480,88 1535,108 1568,110'),1.5);
  coast(W('1350,115 1335,105 1340,88 1357,90 1345,120 1385,140 1370,155 1355,175'),2);coast(W('1400,115 1435,155 1460,150 1415,110 1440,140 1470,135'),3);
  coast(W('1430,100 1450,110 1470,135'),3);put(W('1453,78 1436,97 1436,112 1453,76 1538,106 1555,110 1533,130 1489,128 1503,140 1523,165 1548,183 1392,144 1385,144 1346,114 1360,136 1368,165 1348,158 1330,162 1445,125 1464,132 1350,137'));
  coast(W('1195,260 1200,210 1215,165 1250,150 1265,150 1290,175 1310,215 1350,190 1340,165'),3);
  chain(W('1165,250 1165,215 1190,190 1200,155 1230,140 1235,155'),36,3);chain(W('1255,140 1290,160 1310,200 1340,180'),30,4);
  fill(W('1160,280 1200,240 1230,185 1270,180 1300,215 1290,270 1200,330'),85,2.5);
  fill(W('1400,150 1470,140 1520,165 1568,190 1568,240 1350,240 1345,220 1370,190'),30,5);
  fill(W('1070,330 1090,290 1120,240 1135,240 1115,280 1125,375 1100,375'),55,2);
  fill(W('1100,375 1130,340 1180,310 1190,250 1300,215 1310,235 1400,245 1460,240 1568,265 1568,375'),520,2.2);
  fill(W('1130,375 1130,345 1200,300 1440,300 1450,375'),170,1.5);
  put(W('1145,285 1146,293'));
  /* Russia and Central Asia */
  coast(E('0,100 45,104 110,104 200,112 248,118 290,130 370,130 400,142 440,134 500,140 560,152 627,182 684,198 695,206 676,222'),.7);
  coast(E('90,86 147,94 185,94 147,98 90,86'),2);coast(E('160,120 200,124 248,118'),2);
  put(E('21,102 45,104 16,113 12,127 84,110 111,104 131,113 147,94 198,107 207,121 165,121 179,133 114,133 79,119 226,127 237,133 291,130 318,127 399,139 417,145 441,136 405,157 465,154 555,169 627,182 684,199 675,222 657,226 642,240 654,254 600,205 573,211 537,205 530,214 516,236 588,240 567,233 555,228 525,257 531,265 540,285 708,267 723,267 741,305 753,302 777,327 504,180 480,202 504,212 489,253'));
  fill(E('0,130 200,135 280,150 440,170 430,260 250,270 0,265'),60,7);chain(E('280,155 285,190 290,240 285,265'),14,1.5);
  fill(E('0,262 230,262 220,295 140,335 0,325'),140,2);
  chain(E('230,270 320,300 360,325 430,320 520,310 600,345'),46,4);fill(E('230,280 540,290 520,345 460,355 280,345'),50,5);
  coast(E('220,330 260,325 290,315 340,320 400,320 450,330 500,360 515,365 490,390 480,415 445,428 370,415 330,390 290,385 250,360 215,345'),1.2);
  coast(E('450,300 500,298 540,320 590,345 640,350'),1);coast(E('45,405 80,425 110,440 160,430 200,380 230,345'),1.5);
  fill(E('50,350 210,320 250,340 220,400 130,430 50,400'),48,5);fill(E('100,400 210,380 200,430 160,470 100,470'),60,2);
  fill(E('50,440 160,450 190,520 150,560 100,570 50,560'),65,2.5);put(E('53,565 72,578 129,578 59,610 132,620 108,627 106,660 105,685 60,730 66,731'));
  chain(E('50,600 80,640 108,660'),16,3);coast(E('50,570 100,575 130,600 125,625 170,630 180,640'),1);coast(E('50,655 68,665 62,695 50,700'),.6);coast(E('105,665 103,690 85,715 60,730'),1.5);
  coast(E('165,460 200,490 240,520 290,560 350,585 390,600 430,600 470,580 495,610 510,650 545,670'),1.5);
  fill(E('210,350 480,340 440,420 230,420'),16,8);fill(E('200,420 450,410 540,480 460,600 400,590'),24,9);
  /* Kamchatka, Sakhalin */
  coast(E('520,238 590,232 573,211 600,210 640,225 654,254 700,280 760,300 790,340 802,370 795,405'),1.5);coast(E('540,285 608,296 650,315 700,345 723,370'),1.2);
  put(E('608,298 618,296 651,313 657,324 669,345 699,350 720,368 723,370 687,343 711,343 730,385 620,327'));coast(E('640,320 680,360 700,390'),1);
  specks(E('765,278 800,285'),12,1.5);specks(E('868,302 955,318'),14,2);specks(E('660,200 700,225 660,235'),18,6);
  /* China, Korea, Japan */
  fill(E('500,330 620,330 640,350 700,400 690,450 630,440 590,400 540,380'),95,2.5);
  fill(E('640,375 695,400 690,455 640,440'),40,2);
  fill(E('470,430 560,420 640,440 660,530 560,540 480,510'),75,3);
  fill(E('600,500 660,525 720,580 718,640 640,660 600,600'),140,2);
  fill(E('510,540 620,520 640,650 520,670 510,600'),85,3);
  chain(E('655,450 690,475 720,500 740,520'),34,3);chain(E('762,404 790,412 800,440 820,465 842,500 800,515 765,530 790,550'),80,3);
  fill(E('800,455 825,460 845,500 800,515'),18,2);
  coast(E('790,545 800,590 797,615 770,638'),1);put(E('797,615 789,550'));chain(E('738,625 745,662'),14,3);
  coast(E('642,690 660,700 650,716 640,705'),1);put(E('651,714 651,690'));
  /* India */
  fill(E('140,500 230,540 400,600 395,640 230,570 150,540'),95,2);
  fill(E('180,600 240,560 400,620 390,680 340,720 280,740 200,640'),62,5);
  fill(E('200,640 250,660 290,720 275,760 240,690'),26,2);
  fill(E('270,700 345,710 355,770 350,820 330,850 305,830 270,745'),85,2.5);
  fill(E('370,590 460,595 465,665 370,665'),75,2);chain(E('345,745 370,715 395,685 400,665'),22,2);
  chain(E('365,830 380,850 366,872 352,850 365,830'),18,2);coast(E('180,640 240,690 270,750 300,810 325,850 350,800 355,740 395,690 440,660 470,690'),1);
  put(E('273,812 291,895'));specks(E('283,850 290,960'),30,3);
  /* South-east Asia */
  fill(E('470,660 560,650 610,670 600,720 550,760 500,745'),105,2);fill(E('545,720 620,700 680,780 675,815 635,835 560,780'),150,1.8);
  chain(E('540,640 620,665 690,660'),30,2);chain(E('558,790 560,840 600,870 625,930 612,920'),60,4);
  coast(E('490,750 490,800 505,850 528,878 570,935 600,985 650,1035'),2);specks(E('530,900 610,1005'),50,4);put(E('492,797 528,878'));
  chain(E('545,880 575,935 590,965 640,1015'),26,4);chain(E('645,1035 690,1045 740,1058 755,1064'),52,2.5);chain(E('755,1062 860,1060'),10,1);put(E('795,1075 831,1080 858,1060 672,895 669,986 652,978 624,971'));
  coast(E('650,1045 760,1065 860,1055 930,1040'),1.2);specks(E('860,1055 960,1020'),40,6);
  coast(E('790,850 770,870 740,890 690,930 685,950 700,990 760,995 775,960 790,935 780,900'),1.5);coast(E('700,930 740,930 755,895'),.7);
  chain(E('685,940 735,890 780,875 778,910'),16,2);put(E('780,823 777,950 774,957 771,965 738,978 735,985 726,984 746,995 685,950'));
  coast(E('810,1020 800,960 840,940 870,930 885,945'),1.5);fill(E('790,985 840,985 835,1025 790,1020'),13,2);put(E('804,961 813,969 837,964 840,943 858,933'));
  coast(E('770,690 780,740 830,800 865,875'),1.5);fill(E('765,710 785,710 800,760 850,795 870,870 850,875 820,810 780,765'),55,2);coast(E('830,860 790,885'),1.5);put(E('822,860'));
  fill(E('880,930 895,930 895,945 880,945'),4,1);specks(E('860,890 900,930 890,1000 960,980'),70,14);put(E('892,998 904,992 910,990'));
  /* New Guinea and the Pacific */
  coast(E('920,955 960,960 1000,975 1040,985 1065,995 1090,1015 1120,1030 1145,1020 1160,1000 1145,985'),1.5);coast(E('975,990 990,1010 1000,1050 1020,1060 1050,1070 1090,1065 1125,1085'),1.5);coast(E('1036,985 1030,1065'),.4);
  put(E('930,960 960,960 981,966 975,995 990,1009 1032,983 1041,986 1065,995 1107,977 1146,983 1158,1003 1137,1020 1131,1022 1062,1025 1068,1028 1080,1028 1086,1018 1098,1036 1080,1052 1107,1063 1092,1071 1104,1080 1125,1083 1050,1070 1020,1060 1185,1020 1194,1031 1203,1055 1233,1072 1293,1088 1284,1148 1284,1178 1233,1238 1410,1163 1380,1181 1389,1184 1446,1060 1392,932 1365,858 1218,861 959,853 957,855 1056,753 1050,775'));
  specks(E('1140,970 1190,1030 1250,1090'),40,6);specks(E('1283,1210 1298,1110'),24,3);specks(E('1220,1205 1255,1220'),16,5);specks(E('1380,1190 1415,1160'),20,4);specks(E('1015,685 1050,750'),12,2);specks(E('1395,935 1430,985'),12,2);specks(E('1330,860 1380,880'),14,8);specks(E('935,600 955,640'),8,1);specks(E('840,500 895,560'),8,2);specks(E('1120,860 1190,930'),8,10);specks(E('1150,1090 1230,1100'),10,4);
  /* Australia */
  coast(E('615,1375 645,1330 650,1285 660,1265 680,1230 735,1212 790,1180 830,1140 860,1130 875,1145 905,1105 925,1095 970,1105 960,1130 948,1150 975,1175 1000,1160 1020,1115 1035,1080 1040,1120 1048,1165 1058,1220 1070,1270 1040,1320 990,1355 950,1395 900,1420 870,1440 820,1435 805,1390 812,1365 790,1350 740,1358 700,1375 640,1385'),1);
  put(E('904,1112 908,1125 911,1137 867,1150 810,1170 789,1180 846,1186 912,1177 909,1203 975,1177 990,1174 1014,1186 1023,1114 1044,1165 948,1206 957,1217 969,1217 995,1217 1008,1217 984,1237 990,1250 999,1250 948,1243 879,1254 864,1274 840,1274 816,1280 921,1280 933,1262 960,1274 966,1291 990,1288 1014,1288 951,1308 1032,1251 1040,1231 1035,1208 954,1334 738,1211 719,1217 710,1226 697,1230 684,1231 717,1240 735,1248 660,1268 648,1303 645,1318 655,1323 702,1291 684,1308 714,1317 726,1314 702,1339 675,1345 662,1351 693,1360 662,1377 678,1380 915,1351 891,1357 861,1337 849,1345 840,1343 912,1371 909,1383 918,1388 876,1382 893,1380'));
  chain(E('1043,1165 1050,1195 1062,1225 1064,1260 1050,1305 1020,1330 980,1360 950,1390 915,1410'),92,4);
  fill(E('805,1345 850,1345 870,1400 910,1395 920,1415 870,1440 820,1438 818,1400'),62,1.5);chain(E('620,1390 618,1375 640,1350'),24,2.5);
  fill(E('810,1490 815,1465 830,1450 855,1465 825,1490'),14,1.5);coast(E('805,1495 830,1450 865,1455'),1.5);
  chain(E('955,1524 1000,1508 1045,1480 1095,1468 1140,1445 1165,1425'),32,2);chain(E('1120,1440 1165,1430 1173,1402'),16,2.5);coast(E('935,1535 1000,1508 1045,1480 1110,1465 1165,1435 1183,1425 1173,1385'),1.5);coast(E('960,1530 1045,1495'),1);
  put(E('66,787 90,1009 90,1210 67,1217'));
  /* South America tip */
  fill(P('668,722 700,722 705,745 712,758 684,744'),24,2);coast(P('666,720 680,742 710,758 718,754'),1.5);coast(P('672,732 690,750 714,757'),2);put(P('720,743 724,742 787,752 777,775'));
  specks(P('810,758 820,770'),8,3);
  /* Antarctica: a rough northern coast, a smooth edge to the south */
  coast(P('660,826 680,820 700,815 745,818 742,806 750,798 746,785 760,788 765,808 775,825 800,836 835,838 860,812 885,811 930,806 985,797 1010,800 1030,808 1050,795 1075,797 1112,793 1160,797 1185,800 1187,809 1165,812 1140,820 1108,829 1035,842'),1.5);
  coast(P('1035,842 960,850 882,852 810,850 750,843'),.2);
  coast(P('750,843 700,834 660,826'),1.5);
  coast(P('660,825 680,829 742,819 728,828 690,822 745,826 770,846'),2);coast(P('662,828 690,816 720,818 700,824 735,822'),2);coast(P('745,818 755,822 800,833 820,828 835,838'),2);coast(P('690,830 720,836 750,840 768,846'),2);
  chain(P('747,778 750,798 762,790'),14,3);chain(P('765,800 785,802'),3,1);
  put(P('708,801 775,775 836,829 837,838 843,824 865,809 864,817 869,814 886,811 904,808 959,803 1008,799 1027,803 1033,802 1074,795 1112,793 1174,797 1080,819 1110,828 1142,819 1023,829 882,851'));
  specks(P('1212,798 1218,794'),6,1);specks(P('1290,754 1300,750'),5,1);specks(P('1077,732 1080,740'),10,3);specks(P('1340,745 1365,722'),5,2);
  /* selected cities */
  gold.push(...E('270,405 597,382 615,405 608,405 603,438 570,450 585,460 615,427 500,442 482,495 570,470 552,472 548,515 606,487 616,487 628,462 642,475 645,492 667,458 693,475 632,507 590,510 528,558 545,558 558,573 656,545 663,546 693,555 578,610 545,630 633,590 660,583 714,592 713,617 617,658 680,660 672,655 705,635 742,630 738,642 744,658 600,681 651,693 512,732 570,772 645,808 789,761 425,647 408,661 447,664 360,621 309,612 258,607 221,550 209,550 156,513 177,632 240,656 276,658 315,678 250,678 258,703 270,711 321,727 324,784 351,781 120,433 54,493 584,880 567,903 626,932 653,1028 663,1040 720,1043 965,1379 864,1425 765,412 819,467 838,498 811,505 803,511 777,517 765,523 738,507 726,495 630,560'),...W('1297,242 1350,288 1214,324 1120,310 1122,325 1133,336 1187,350 1192,366 1149,366 1238,373 1324,348 356,362'));
  const c=(a,f)=>a.map(([x,y])=>`<circle cx="${x.toFixed(1)}" cy="${y.toFixed(1)}" r="2.7" fill="${f}"/>`).join('');
  root.querySelector('svg').innerHTML=`<path d="${lines.join('')}" fill="none" stroke="#222" stroke-width=".8"/><g stroke="#001800" stroke-width=".9">${c(dots,'#00a000')}${c(gold,'#fff200')}</g>`;
});

/* ---------- expression dialog ---------- */
define('tree-item',`<style>
:host{display:flex;height:15px;line-height:12px;align-items:stretch}
svg{width:20px;flex:none}span{flex:1;background:#ececec;padding-left:5px}
:host(:not([group])) span{background:none;padding-left:25px;margin-left:20px}
:host([group]) .c{display:block}.c{display:none}:host([open]) .c,:host .o{display:none}:host([open]) .o{display:block}
:host([selected]){background:#cfcfcf}
</style><svg class="c" height="15"><path d="M7 3l8 4-8 4z" fill="#808080"/></svg><svg class="o" height="15"><path d="M6 3h10l-5 8z" fill="#808080"/></svg><span><slot></slot></span>`);

define('expression-dialog',()=>{
  const item=t=>`<tree-item${t==='pop_max'?' selected':''}>${t}</tree-item>`, grp=t=>`<tree-item group>${t}</tree-item>`;
  const groups=['Aggregates','Color','Conditionals','Conversions','Date and Time'].map(grp).join('');
  const fields=['name','adm0name','NULL','adm0_a3','latitude','longitude','pop_max','pop_min'].map(item).join('');
  const rest=['Fuzzy Matching','General','Geometry'].map(grp).join('');
  return `<style>
  :host{display:flex;flex-direction:column;background:#ececec;border-radius:5px;box-shadow:0 0 1px 1px rgba(0,0,0,.18),0 10px 26px rgba(0,0,0,.32);overflow:hidden}
  *{box-sizing:border-box}
  header{display:grid;grid-template-columns:1fr auto 1fr;align-items:center;height:22px;padding:0 15px 0 8px;background:#f6f6f6;border-bottom:1px solid #e2e2e2;color:#adadad;font:13px/16px Inter,sans-serif}
  header h1{font:inherit;margin:0;display:flex;align-items:center;gap:5px}
  .tabs{display:flex;height:22px;margin:4px 3px 0;background:#a1a1a1;border-top:1px solid #7d7d7d;border-bottom:1px solid #7d7d7d}
  .tabs button{font:inherit;padding:0 12px 2px 11px;border:0;border-right:1px solid #777;background:#a1a1a1}
  .tabs button.on{background:#d6d6d6;border:1px solid #777;border-top:0;border-radius:0 0 3px 3px}
  .cols{display:flex;align-items:flex-start;padding:0 15px 0 3px;height:298px}
  .left{width:338px;padding-top:9px;display:flex;flex-direction:column;gap:10px}
  .ops{display:flex;width:300px;height:32px;border:1px solid #a9a9a9}
  .ops button{flex:0 0 29px;padding:0 0 3px 8px;font:inherit;border:0;border-right:1px solid #a9a9a9;background:linear-gradient(#e9e9e9,#f6f6f6);text-align:center}
  .ops button:last-child{flex:1;padding-left:0;border:0}
  .box{background:#fff;border:1px solid #b2b2b2;border-top-color:#888}
  .edit{height:236px;display:flex;flex-direction:column}
  .code{flex:1;padding:0 5px;line-height:11px;outline:0}
  .code i{font-style:normal;color:#808000}.code b{font-weight:normal;color:#008080}
  .hs{height:15px;border-top:1px solid #e6e6e6;padding:3px 1px;background:#fafafa}.hs i{display:block;width:54px;height:8px;border-radius:4px;background:#c1c1c1}
  .out{line-height:12px}
  .split{flex:none;align-self:stretch;display:flex;align-items:flex-start;padding-top:151px}
  .split i{width:7px;height:8px;background:#d2d2d2;border:1px solid #f8f8f8;border-radius:50%}
  .mid{width:265px;padding-top:14px;display:flex;flex-direction:column;gap:12px}
  input{font:inherit;border:0;background:#fff;height:17px;padding:0 1px 2px;margin:0;min-width:0}
  input::placeholder{color:#777;opacity:1}
  .mid input{margin:0 1px}
  .tree{height:255px;display:flex;overflow:hidden}.tree>div{flex:1}
  .vs{width:15px;background:#fafafa;border-left:1px solid #e6e6e6;padding:1px 3px}.vs i{display:block;width:8px;border-radius:4px;background:#c1c1c1}
  .right{flex:1;padding-top:12px;display:flex;flex-direction:column;gap:12px}
  .help{height:101px;display:flex;overflow:hidden}
  .help div.t{flex:1;padding:4px 4px 0;line-height:15px}
  .help h3{margin:0 0 13px;background:#f6f6f6;color:#729fcf;font:bold 19px/19px "Liberation Serif",serif}
  .help p{margin:0}
  .val{display:flex;align-items:center}.val label{width:49px;padding-bottom:2px}.val input{flex:1;margin-right:2px}
  .list{height:102px}
  .load{display:flex;align-items:center;margin-top:2px}.load span{width:85px;padding-bottom:4px}
  .pill{font:inherit;height:21px;padding:0 0 3px;border:1px solid #c6c6c6;border-bottom-color:#aaa;border-radius:4px;background:#fff}
  .load .u{width:86px;margin-right:14px}.load .s{width:97px}
  footer{display:flex;justify-content:flex-end;align-items:center;padding:26px 17px 8px 0;gap:14px}
  .sel{display:flex;height:31px;border:1px solid #c0c0c0}
  .sel button{font:11px/16px "Liberation Sans",Arial,sans-serif;border:0;background:#ebebeb;display:flex;align-items:center;gap:5px;padding:0}
  .sel .m{width:66px;padding:0 0 1px 5px;border-right:1px solid #c0c0c0}.sel .d{width:11px;align-items:flex-end;justify-content:center;padding-bottom:2px}
  .close{width:64px}
  </style>
  <header><window-lights></window-lights><h1><ui-icon name="q" size="13"></ui-icon>Select by expression - populated_places</h1></header>
  <div class="tabs" role="tablist"><button class="on" role="tab">Expression</button><button role="tab">Function Editor</button></div>
  <div class="cols">
   <div class="left"><div class="ops">${['=','+','-','/','*','^','||','(',')',"'\\n'"].map(t=>`<button>${t}</button>`).join('')}</div>
    <div class="box edit"><div class="code" contenteditable="true" role="textbox" aria-label="Expression" spellcheck="false"><i>"pop_max"</i> &gt; <b>2000000</b></div><div class="hs"><i></i></div></div>
    <div class="out">Output preview: &nbsp;&nbsp; 0</div></div>
   <div class="split" style="width:16px"><i></i></div>
   <div class="mid"><input type="search" placeholder="Search" aria-label="Search functions">
    <div class="box tree"><div role="tree">${groups}<tree-item group open>Fields and Values</tree-item>${fields}${rest}</div><div class="vs" style="flex:none"><i style="height:168px"></i></div></div></div>
   <div class="split" style="width:8px"><i></i></div>
   <div class="right"><div class="box help"><div class="t"><h3>group Field</h3><p>Double click to add field name to expression string.</p><p>Right-Click on field name to open context menu sample value loading options.</p></div><div class="vs"><i style="height:51px"></i></div></div>
    <div class="val"><label for="v">Values</label><input id="v" type="search" placeholder="Search"></div>
    <div class="box list" role="listbox" aria-label="Values"></div>
    <div class="load"><span>Load values</span><button class="pill u">all unique</button><button class="pill s">10 samples</button></div></div>
  </div>
  <footer><div class="sel"><button class="m"><ui-icon name="selx" size="15"></ui-icon>Select</button><button class="d" aria-label="Select options"><svg width="7" height="6"><path d="M0 0h7l-3.5 6z" fill="#8a8a8a"/></svg></button></div><button class="pill close">Close</button></footer>`;
});

/* ---------- status bar ---------- */
define('status-bar',`<style>
:host{display:flex;align-items:center;height:46px;box-sizing:border-box;border-top:1px solid #b4b4b4;background:#ebebeb;padding:0 0 3px 3px;flex:none;position:relative;white-space:nowrap}
*{box-sizing:border-box}
.msg{flex:1}
input,select{font:inherit;margin:0;border:0;background:#fff;border-radius:0}
button{font:inherit;padding:0;border:1px solid #c4c4c4;background:#ededed;display:flex;align-items:center;justify-content:center}
.xy{width:147px;height:18px;text-align:center;margin:0 2px 0 6px}
.sq{width:26px;height:26px}
.scale{display:flex;height:22px}
select{appearance:none;width:99px;height:22px;border:1px solid #b8b8b8;border-right:0;border-bottom-color:#ddd;padding:0 0 0 2px}
.chev{width:18px;background:#cdcdcd;border-radius:0 4px 4px 0;display:flex;align-items:center;justify-content:center;margin-right:1px}
.num{width:65px;height:22px;border:1px solid #b2b2b2;padding:0 2px}
.spin{width:13px;height:22px;margin:0 9px 0 3px;border:1px solid #c4c4c4;border-radius:6px;background:#fff;display:flex;align-items:center;justify-content:center}
.ck{appearance:none;width:14px;height:14px;border:1px solid #c4c4c4;border-radius:2px;background:#efefef;position:relative}
.ck::after{content:"";position:absolute;left:4px;top:1px;width:3px;height:7px;border:solid #c2c2c2;border-width:0 1px 1px 0;transform:rotate(38deg)}
.crs{width:153px;height:18px;justify-content:flex-start;padding-left:5px;gap:3px;margin:0 6px 0 2px}
.bub{width:38px;height:18px;justify-content:flex-start;padding-left:5px;margin-right:25px}
.grip{position:absolute;right:0;bottom:0}
</style>
<span class="msg">215 feature(s) selected on layer populated_places.</span>
<label for="xy">Coordinate</label><input class="xy" id="xy" value="-17443911,7135608">
<button class="sq" aria-label="Toggle extents"><ui-icon name="mouse" size="16"></ui-icon></button>
<label for="sc" style="margin:0 4px 0 9px">Scale</label><div class="scale"><select id="sc"><option>1:77,108,219</option></select><span class="chev"><svg width="8" height="6"><path d="M1 1l3 3 3-3" fill="none" stroke="#fff" stroke-width="1.5"/></svg></span></div>
<button class="sq" aria-label="Lock scale"><ui-icon name="lock" size="16"></ui-icon></button>
<label for="mg" style="margin:0 5px 0 9px">Magnifier</label><input class="num" id="mg" value="100%"><span class="spin"><svg width="7" height="14" fill="none" stroke="#333" stroke-width="1.3"><path d="M1 4l2.5-2.5L6 4M1 10l2.5 2.5L6 10"/></svg></span>
<label for="ro" style="margin-right:10px">Rotation</label><input class="num" id="ro" value="0.0"><span class="spin" style="margin-right:7px"><svg width="7" height="14" fill="none" stroke="#333" stroke-width="1.3"><path d="M1 4l2.5-2.5L6 4M1 10l2.5 2.5L6 10"/></svg></span>
<input class="ck" type="checkbox" id="rn" checked><label for="rn" style="margin-left:4px">Render</label>
<button class="crs"><ui-icon name="crs" size="16"></ui-icon>EPSG:54009 (OTF)</button><button class="bub" aria-label="Messages"><ui-icon name="bubble" size="17"></ui-icon></button>
<svg class="grip" width="12" height="12"><path d="M1 12L12 1M5 12l7-7M9 12l3-3" stroke="#777"/></svg>`);

/* ---------- shell ---------- */
const buttons=s=>s.split(' ').map(n=>{const [i,f]=n.split(':');return `<tool-button icon="${i}"${f==='m'?' menu':''}${f==='a'?' active':''}></tool-button>`;}).join('');
const group=s=>`<tool-group><grip-dots></grip-dots>${buttons(s)}</tool-group>`;
const side=s=>`<tool-group column><grip-dots wide></grip-dots>${s.split(' ').map(n=>{const [i,f]=n.split(':');return `<tool-button side icon="${i}"${f==='m'?' menu':''}${f==='i'?' inset':''}></tool-button>`;}).join('')}</tool-group>`;
define('qgis-app',`<style>
:host{display:flex;flex-direction:column;height:100vh;position:relative;overflow:hidden}
header{display:grid;grid-template-columns:1fr auto 1fr;align-items:center;height:19px;padding:0 12px 2px 5px;background:#f5f5f5;border-bottom:1px solid #dcdcdc;box-sizing:border-box;flex:none;color:#ababab;font:13px/16px Inter,sans-serif}
h1{font:inherit;margin:0}
main{display:flex;flex:1;min-height:0;border-top:1px solid #888}
tool-bar[column]{box-sizing:border-box;flex:none}
expression-dialog{position:absolute;left:143px;top:315px;width:933px}
.arrow{position:absolute;left:66px;bottom:46px}
</style>
<header><window-lights></window-lights><h1>QGIS 2.18.15 - MappingData_Population</h1></header>
<tool-bar>${group('file open save saveas composer manager')}${group('hand:a pan zin zout z11 zfull zsel zlay zlast znext bmnew bm refresh')}${group('identify action:m select:m selexp:m deselect table abacus sigma measure:m tip text:m')}${group('help')}</tool-bar>
<tool-bar>${group('edits pencil saveed addf curve:m movef node trash cut copy paste')}${group('label pie abpin pin labeye labmove labrot labedit')}${group('csw')}${group('python hill docs mappin chain web')}</tool-bar>
<main><tool-bar column>${side('vec ras feather pg:m spat:m wms wfs:m comma virt newv:m')}${side('curl:i sheet:i')}</tool-bar><layers-panel></layers-panel><map-canvas></map-canvas></main>
<status-bar></status-bar>
<expression-dialog role="dialog" aria-label="Select by expression"></expression-dialog>
<svg class="arrow" width="84" height="100" aria-hidden="true"><path d="M78 5L22 72" stroke="#ff40ff" stroke-width="5"/><path d="M4 95l9-29 20 16z" fill="#ff40ff"/></svg>`);
</script>
</body>
</html>
